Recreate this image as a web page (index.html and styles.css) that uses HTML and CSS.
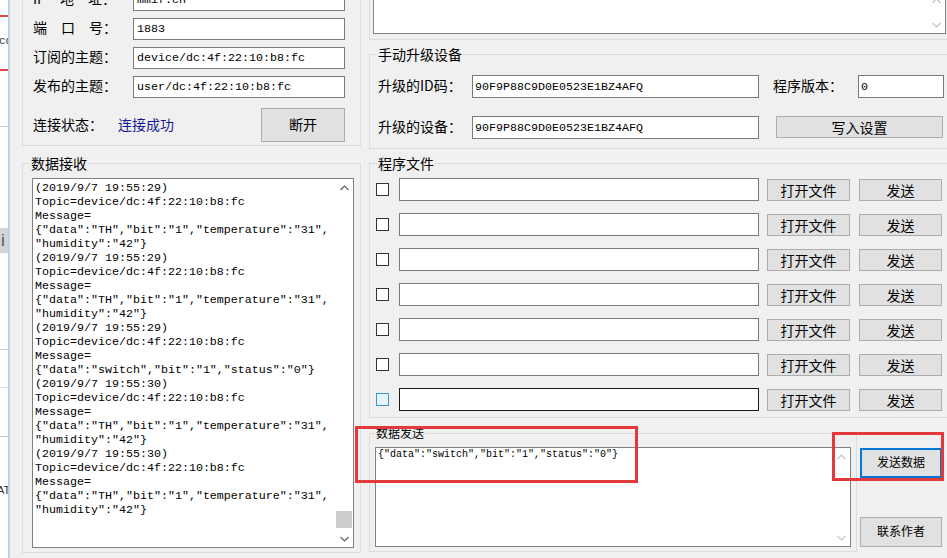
FILE: index.html
```html
<!DOCTYPE html>
<html lang="zh-CN">
<head>
  <meta charset="UTF-8">
  <title>MQTT 升级工具</title>
  <link rel="stylesheet" href="styles.css">
</head>
<body>

  <div class="screen">
    <!-- edge of the window behind -->
    <div class="strip">
      <div class="strip-red strip-red-1"></div>
      <div class="strip-text">co</div>
      <div class="strip-red strip-red-2"></div>
      <div class="strip-line strip-line-1"></div>
      <div class="strip-block">i</div>
      <div class="strip-line strip-line-2"></div>
      <div class="strip-line strip-line-3"></div>
      <div class="strip-line strip-line-4"></div>
      <div class="strip-text strip-text-at">AT</div>
    </div>

    <div class="window">
      <div class="col-left">
        <fieldset class="group group-conn">
          <div class="form-grid">
            <span>IP　地　址：</span>
            <div class="textbox">mmif.cn</div>
            <span>端　口　号：</span>
            <div class="textbox">1883</div>
            <span>订阅的主题：</span>
            <div class="textbox">device/dc:4f:22:10:b8:fc</div>
            <span>发布的主题：</span>
            <div class="textbox">user/dc:4f:22:10:b8:fc</div>
          </div>
          <div class="status-row">
            <span class="status-label">连接状态：</span>
            <span class="status-ok">连接成功</span>
            <button class="btn btn-big">断开</button>
          </div>
        </fieldset>

        <fieldset class="group group-recv">
          <legend>数据接收</legend>
          <div class="recv-box">
<pre class="recv-text">(2019/9/7 19:55:29)
Topic=device/dc:4f:22:10:b8:fc
Message=
{"data":"TH","bit":"1","temperature":"31",
"humidity":"42"}
(2019/9/7 19:55:29)
Topic=device/dc:4f:22:10:b8:fc
Message=
{"data":"TH","bit":"1","temperature":"31",
"humidity":"42"}
(2019/9/7 19:55:29)
Topic=device/dc:4f:22:10:b8:fc
Message=
{"data":"switch","bit":"1","status":"0"}
(2019/9/7 19:55:30)
Topic=device/dc:4f:22:10:b8:fc
Message=
{"data":"TH","bit":"1","temperature":"31",
"humidity":"42"}
(2019/9/7 19:55:30)
Topic=device/dc:4f:22:10:b8:fc
Message=
{"data":"TH","bit":"1","temperature":"31",
"humidity":"42"}</pre>
            <div class="vscroll">
              <div class="arrow"><svg width="9" height="6" viewBox="0 0 9 6"><polyline points="0.5,5 4.5,1 8.5,5" fill="none" stroke="#606060" stroke-width="1.2"/></svg></div>
              <div class="track"><div class="thumb"></div></div>
              <div class="arrow"><svg width="9" height="6" viewBox="0 0 9 6"><polyline points="0.5,1 4.5,5 8.5,1" fill="none" stroke="#606060" stroke-width="1.2"/></svg></div>
            </div>
          </div>
        </fieldset>
      </div>

      <div class="col-right">
        <fieldset class="group group-top">
          <div class="memo">
            <div class="vscroll vscroll-off">
              <div class="arrow"><svg width="9" height="6" viewBox="0 0 9 6"><polyline points="0.5,5 4.5,1 8.5,5" fill="none" stroke="#c2c2c2" stroke-width="1.2"/></svg></div>
              <div class="track"></div>
              <div class="arrow"><svg width="9" height="6" viewBox="0 0 9 6"><polyline points="0.5,1 4.5,5 8.5,1" fill="none" stroke="#c2c2c2" stroke-width="1.2"/></svg></div>
            </div>
          </div>
        </fieldset>

        <fieldset class="group group-upgrade">
          <legend>手动升级设备</legend>
          <div class="upgrade-grid">
            <span>升级的ID码：</span>
            <div class="textbox textbox-tall">90F9P88C9D0E0523E1BZ4AFQ</div>
            <span class="col-4">程序版本：</span>
            <div class="textbox textbox-tall">0</div>
            <span>升级的设备：</span>
            <div class="textbox textbox-tall">90F9P88C9D0E0523E1BZ4AFQ</div>
            <button class="btn btn-write">写入设置</button>
          </div>
        </fieldset>

        <fieldset class="group group-files">
          <legend>程序文件</legend>
          <div class="file-list">
            <div class="file-row">
              <span class="check"></span>
              <div class="textbox file-path"></div>
              <button class="btn btn-file">打开文件</button>
              <button class="btn btn-file btn-send">发送</button>
            </div>
            <div class="file-row">
              <span class="check"></span>
              <div class="textbox file-path"></div>
              <button class="btn btn-file">打开文件</button>
              <button class="btn btn-file btn-send">发送</button>
            </div>
            <div class="file-row">
              <span class="check"></span>
              <div class="textbox file-path"></div>
              <button class="btn btn-file">打开文件</button>
              <button class="btn btn-file btn-send">发送</button>
            </div>
            <div class="file-row">
              <span class="check"></span>
              <div class="textbox file-path"></div>
              <button class="btn btn-file">打开文件</button>
              <button class="btn btn-file btn-send">发送</button>
            </div>
            <div class="file-row">
              <span class="check"></span>
              <div class="textbox file-path"></div>
              <button class="btn btn-file">打开文件</button>
              <button class="btn btn-file btn-send">发送</button>
            </div>
            <div class="file-row">
              <span class="check"></span>
              <div class="textbox file-path"></div>
              <button class="btn btn-file">打开文件</button>
              <button class="btn btn-file btn-send">发送</button>
            </div>
            <div class="file-row">
              <span class="check check-hover"></span>
              <div class="textbox file-path file-path-focus"></div>
              <button class="btn btn-file">打开文件</button>
              <button class="btn btn-file btn-send">发送</button>
            </div>
          </div>
        </fieldset>

        <div class="send-row">
          <fieldset class="group group-send">
            <legend>数据发送</legend>
            <div class="send-box">
              <div class="send-text">{"data":"switch","bit":"1","status":"0"}</div>
              <div class="vscroll vscroll-off">
                <div class="arrow"><svg width="9" height="6" viewBox="0 0 9 6"><polyline points="0.5,5 4.5,1 8.5,5" fill="none" stroke="#c2c2c2" stroke-width="1.2"/></svg></div>
                <div class="track"></div>
                <div class="arrow"><svg width="9" height="6" viewBox="0 0 9 6"><polyline points="0.5,1 4.5,5 8.5,1" fill="none" stroke="#c2c2c2" stroke-width="1.2"/></svg></div>
              </div>
            </div>
          </fieldset>
          <div class="send-side">
            <button class="btn btn-small btn-focus">发送数据</button>
            <button class="btn btn-small">联系作者</button>
          </div>
        </div>
      </div>
    </div>
  </div>

  <!-- red marks drawn over the screenshot -->
  <div class="mark mark-text"></div>
  <div class="mark mark-button"></div>

</body>
</html>
```

FILE: styles.css
```css
* {
  box-sizing: border-box;
}
html, body {
  margin: 0;
}
body {
  position: relative;
  width: 947px;
  height: 558px;
  overflow: hidden;
  background: #f0f0f0;
  font-family: "Noto Sans CJK SC", "Noto Sans", sans-serif;
  font-size: 14px;
  color: #000;
}
.screen {
  display: flex;
  height: 558px;
}

/* window behind, left edge */
.strip {
  width: 10px;
  flex: none;
  background: #fff;
  border-right: 2px solid #bfd3e6;
  overflow: hidden;
  display: flex;
  flex-direction: column;
}
.strip-red {
  height: 2px;
  background: #e04848;
}
.strip-red-1 {
  margin-top: 15px;
}
.strip-red-2 {
  margin-top: 22px;
}
.strip-text {
  margin-top: 18px;
  height: 12px;
  font-family: "Liberation Mono", monospace;
  font-size: 11px;
  line-height: 12px;
  color: #333;
  white-space: nowrap;
  margin-left: -1px;
}
.strip-text-at {
  margin-top: 47px;
  font-family: "Liberation Sans", sans-serif;
  font-size: 11px;
  margin-left: -3px;
}
.strip-line {
  height: 1px;
  background: #c8c8c8;
}
.strip-line-1 {
  margin-top: 55px;
}
.strip-line-2 {
  margin-top: 96px;
}
.strip-line-3 {
  margin-top: 37px;
  background: #d8e4ef;
}
.strip-line-4 {
  margin-top: 48px;
}
.strip-block {
  margin-top: 101px;
  height: 25px;
  background: #d4d4d4;
  color: #555;
  font-family: "Liberation Sans", sans-serif;
  font-size: 17px;
  line-height: 25px;
  padding-left: 1px;
}

/* main window */
.window {
  display: flex;
  gap: 8px;
  padding-left: 12px;
  flex: none;
}
.col-left {
  width: 339px;
  margin-top: -20px;
  display: flex;
  flex-direction: column;
}
.col-right {
  width: 582px;
  margin-top: -13px;
  display: flex;
  flex-direction: column;
}

.group {
  margin: 0;
  min-width: 0;
  padding: 0;
  border: 1px solid #dcdcdc;
}
.group legend {
  font-size: 14px;
  line-height: 16px;
  padding: 0 1px;
}

.textbox {
  height: 100%;
  background: #fff;
  border: 1px solid #7a7a7a;
  padding-left: 3px;
  font-family: "Liberation Mono", monospace;
  font-size: 11.67px;
  display: flex;
  align-items: center;
  white-space: pre;
  overflow: hidden;
}
.textbox-tall {
  padding-left: 2px;
}

.btn {
  padding: 0 0 3px;
  font-family: inherit;
  font-size: 14px;
  color: #000;
  background: #e1e1e1;
  border: 1px solid #adadad;
}

/* connection */
.group-conn {
  padding: 8px 15px 3px 10px;
}
.form-grid {
  display: grid;
  grid-template-columns: 100px 1fr;
  grid-auto-rows: 22px;
  row-gap: 7px;
  align-items: center;
}
.form-grid span {
  padding-bottom: 4px;
}
.status-row {
  display: flex;
  align-items: center;
  height: 34px;
  margin-top: 10px;
}
.status-label {
  width: 85px;
  padding-bottom: 2px;
}
.status-ok {
  flex: 1;
  color: #17178f;
  padding-bottom: 2px;
}
.btn-big {
  width: 84px;
  height: 34px;
}

/* receive */
.group-recv {
  margin-top: 9px;
  padding: 7px 6px 4px 9px;
}
.group-recv legend {
  margin-left: -2px;
}
.recv-box {
  height: 370px;
  background: #fff;
  border: 1px solid #828282;
  display: flex;
}
.recv-text {
  flex: 1;
  margin: 0;
  padding: 2px 0 0 2px;
  font-family: "Liberation Mono", monospace;
  font-size: 11.67px;
  line-height: 14px;
  white-space: pre;
  overflow: hidden;
}
.vscroll {
  width: 17px;
  flex: none;
  display: flex;
  flex-direction: column;
}
.vscroll .arrow {
  height: 17px;
  display: flex;
  align-items: center;
  justify-content: center;
}
.vscroll .track {
  flex: 1;
  display: flex;
  flex-direction: column;
  justify-content: flex-end;
  padding: 0 1px 2px 0;
}
.thumb {
  height: 17px;
  background: #cdcdcd;
}

/* right column */
.group-top {
  padding: 3px 0 5px 3px;
}
.memo {
  width: 573px;
  height: 43px;
  background: #fff;
  border: 1px solid #828282;
  display: flex;
  justify-content: flex-end;
}

.group-upgrade {
  margin-top: 6px;
  padding: 13px 0 9px 8px;
}
.group-upgrade legend {
  margin-left: -1px;
}
.upgrade-grid {
  display: grid;
  grid-template-columns: 94px 287px 14px 85px 86px;
  grid-template-rows: 23px 23px;
  row-gap: 18px;
  align-items: center;
}
.upgrade-grid span {
  padding-bottom: 3px;
}
.col-4 {
  grid-column: 4;
}
.btn-write {
  grid-column: 4 / span 2;
  align-self: start;
  width: 167px;
  height: 22px;
  margin-left: 3px;
}

.group-files {
  margin-top: 6px;
  padding: 7px 0 6px 6px;
}
.group-files legend {
  margin-left: 1px;
}
.file-list {
  display: flex;
  flex-direction: column;
  gap: 12px;
}
.file-row {
  display: flex;
  align-items: center;
  height: 23px;
}
.check {
  width: 13px;
  height: 13px;
  margin-right: 10px;
  background: #fff;
  border: 1px solid #333;
}
.check-hover {
  background: #e5f3fb;
  border-color: #3d97e0;
}
.file-path {
  width: 360px;
  height: 23px;
}
.file-path-focus {
  border-color: #1a1a1a;
}
.btn-file {
  align-self: flex-start;
  width: 83px;
  height: 22px;
  margin-top: 1px;
  margin-left: 8px;
}
.btn-send {
  margin-left: 9px;
}

/* send */
.send-row {
  display: flex;
  align-items: flex-start;
  margin-top: 8px;
}
.group-send {
  width: 488px;
  padding: 7px 0 4px 5px;
}
.group-send legend {
  font-size: 12px;
  line-height: 14px;
}
.send-box {
  width: 476px;
  height: 100px;
  background: #fff;
  border: 1px solid #828282;
  display: flex;
}
.send-text {
  flex: 1;
  padding-left: 2px;
  font-family: "Liberation Mono", monospace;
  font-size: 10px;
  line-height: 14px;
  white-space: pre;
}
.send-side {
  width: 82px;
  margin-left: 3px;
  margin-top: 22px;
  display: flex;
  flex-direction: column;
  gap: 39px;
}
.btn-small {
  height: 30px;
  font-size: 12px;
}
.btn-focus {
  border: 2px solid #0078d7;
}

/* annotation boxes */
.mark {
  position: absolute;
  border: 3px solid #e4393c;
}
.mark-text {
  left: 355px;
  top: 426px;
  width: 283px;
  height: 57px;
}
.mark-button {
  left: 832px;
  top: 432px;
  width: 112px;
  height: 49px;
}
```
